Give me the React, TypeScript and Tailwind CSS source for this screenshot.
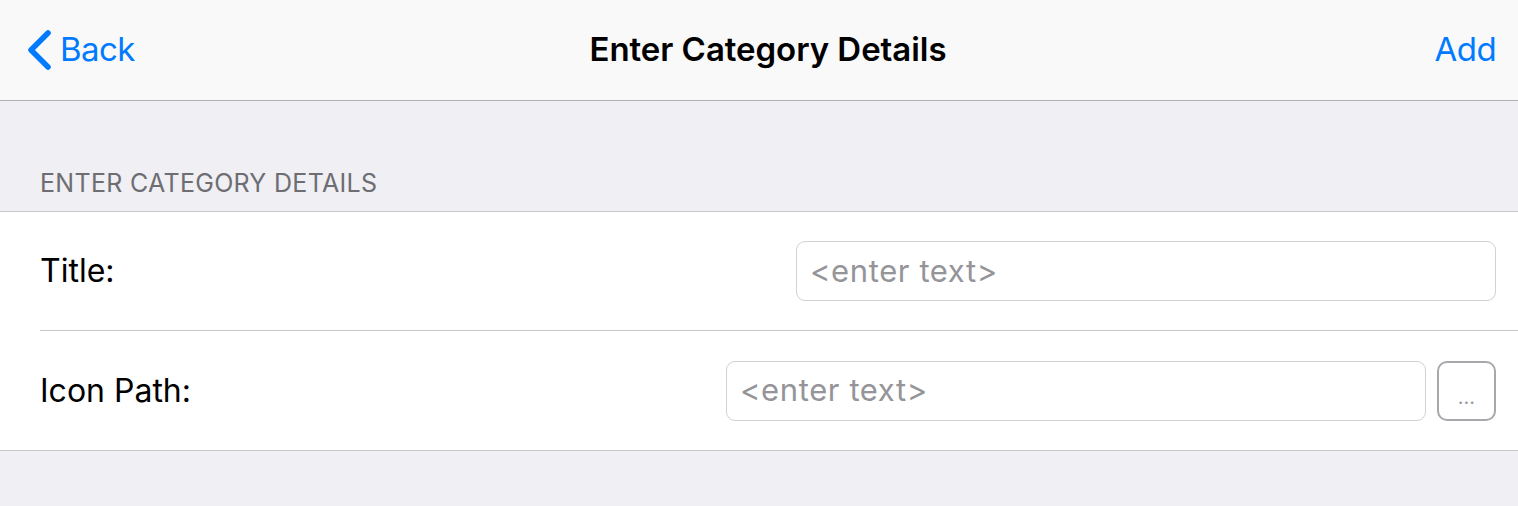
import React from "react";

const font = { fontFamily: "Inter, 'Noto Sans', sans-serif" };

const Field = ({ placeholder }: { placeholder: string }) => (
  <div className="w-[700px] h-[60px] rounded-[9px] border border-[#d1d1d6] bg-white flex items-center px-[13px]">
    <span className="text-[31px] text-[#949499] tracking-[0.6px]">{placeholder}</span>
  </div>
);

export default function App() {
  return (
    <div className="w-full h-[506px] bg-[#efeff4] flex flex-col" style={font}>
      {/* nav bar */}
      <div className="h-[101px] bg-[#f9f9f9] border-b border-[#b2b2b2] grid grid-cols-[1fr_auto_1fr] items-center">
        <div className="flex items-center pl-[28px] text-[#007aff]">
          <svg width="24" height="40" viewBox="0 0 24 40" className="mr-[8px]">
            <path d="M20 3 L3 20 L20 37" fill="none" stroke="#007aff" strokeWidth="5.5" strokeLinecap="round" strokeLinejoin="round" />
          </svg>
          <span className="text-[33px] tracking-[-0.6px]">Back</span>
        </div>
        <div className="pl-[18px] text-[33px] font-semibold text-black tracking-[-0.05px]">Enter Category Details</div>
        <div className="flex justify-end pr-[22px]">
          <span className="text-[33px] text-[#007aff] tracking-[-0.6px]">Add</span>
        </div>
      </div>

      {/* section header */}
      <div className="h-[110px] flex items-end pl-[40px] pb-[9px]">
        <span className="text-[25px] text-[#6d6d72] tracking-[0.3px]">ENTER CATEGORY DETAILS</span>
      </div>

      {/* rows */}
      <div className="bg-white border-y border-[#c8c7cc]">
        <div className="h-[118px] flex items-center justify-between pl-[40px] pr-[22px]">
          <span className="text-[32px] text-black tracking-[0px]">Title:</span>
          <Field placeholder="<enter text>" />
        </div>
        <div className="ml-[40px] h-px bg-[#c8c7cc]" />
        <div className="h-[119px] flex items-center justify-between pl-[40px] pr-[22px]">
          <span className="text-[32px] text-black tracking-[0px]">Icon Path:</span>
          <div className="flex items-center gap-[11px]">
            <Field placeholder="<enter text>" />
            <div className="w-[59px] h-[60px] rounded-[10px] border-2 border-[#a8a8ac] flex items-end justify-center pb-[12px]">
              <span className="text-[20px] leading-none text-[#9a9a9e]">...</span>
            </div>
          </div>
        </div>
      </div>
    </div>
  );
}
